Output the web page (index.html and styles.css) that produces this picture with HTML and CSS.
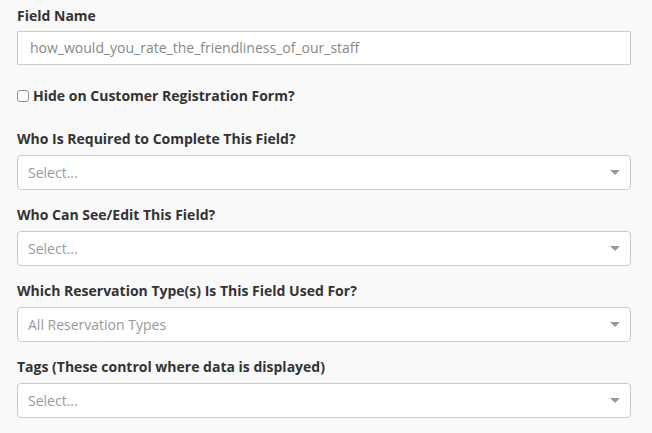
FILE: index.html
```html
<!DOCTYPE html>
<html>
<head>
<meta charset="utf-8">
<link rel="stylesheet" href="styles.css">
</head>
<body>
<div class="form">
  <div class="group">
    <label class="lbl">Field Name</label>
    <div class="input">how_would_you_rate_the_friendliness_of_our_staff</div>
  </div>
  <div class="check-row">
    <span class="box"></span>
    <span class="check-text">Hide on Customer Registration Form?</span>
  </div>
  <div class="group">
    <label class="lbl">Who Is Required to Complete This Field?</label>
    <div class="select"><span class="ph">Select...</span><span class="caret"></span></div>
  </div>
  <div class="group">
    <label class="lbl">Who Can See/Edit This Field?</label>
    <div class="select"><span class="ph">Select...</span><span class="caret"></span></div>
  </div>
  <div class="group">
    <label class="lbl">Which Reservation Type(s) Is This Field Used For?</label>
    <div class="select"><span class="ph">All Reservation Types</span><span class="caret"></span></div>
  </div>
  <div class="group">
    <label class="lbl">Tags (These control where data is displayed)</label>
    <div class="select"><span class="ph">Select...</span><span class="caret"></span></div>
  </div>
</div>
</body>
</html>
```
FILE: styles.css
```css
html, body {
  margin: 0;
  padding: 0;
  background: #f9f9f9;
}
body {
  font-family: "Open Sans", "Liberation Sans", sans-serif;
  color: #333;
}
.form {
  padding: 6px 21px 0 17px;
}
.group {
  margin-bottom: 15px;
}
.lbl {
  display: block;
  font-size: 14px;
  font-weight: 700;
  line-height: 20px;
  margin-bottom: 6px;
  color: #333;
}
.group:first-child .lbl {
  margin-bottom: 5px;
}
.input {
  box-sizing: border-box;
  height: 34px;
  border: 1px solid #ccc;
  background: #fff;
  padding: 0 12px;
  font-size: 14px;
  line-height: 32px;
  color: #888;
}
.group:first-child {
  margin-bottom: 21px;
}
.check-row {
  display: flex;
  align-items: center;
  height: 20px;
  margin-bottom: 23px;
}
.box {
  box-sizing: border-box;
  width: 12px;
  height: 12px;
  border: 1px solid #8f8f8f;
  border-radius: 3px;
  background: #fff;
  margin-right: 4px;
}
.check-text {
  font-size: 14px;
  font-weight: 700;
  line-height: 20px;
}
.select {
  box-sizing: border-box;
  height: 35px;
  border: 1px solid #ccc;
  border-radius: 4px;
  background: #fff;
  display: flex;
  align-items: center;
  justify-content: space-between;
  padding: 0 10px 0 10px;
}
.ph {
  font-size: 14px;
  color: #999;
}
.caret {
  width: 0;
  height: 0;
  border-left: 5px solid transparent;
  border-right: 5px solid transparent;
  border-top: 5px solid #999;
}
```
